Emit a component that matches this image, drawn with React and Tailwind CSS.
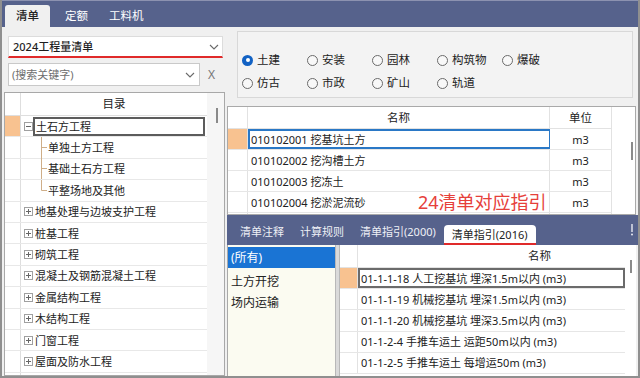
import React from "react";

const treeRows = [
  { label: "土石方工程", open: true, selected: true },
  { label: "单独土方工程", child: true },
  { label: "基础土石方工程", child: true },
  { label: "平整场地及其他", child: true, last: true },
  { label: "地基处理与边坡支护工程" },
  { label: "桩基工程" },
  { label: "砌筑工程" },
  { label: "混凝土及钢筋混凝土工程" },
  { label: "金属结构工程" },
  { label: "木结构工程" },
  { label: "门窗工程" },
  { label: "屋面及防水工程" },
  { label: "", blank: true },
];

const radios = [
  ["土建", true],
  ["安装"],
  ["园林"],
  ["构筑物"],
  ["爆破"],
  ["仿古"],
  ["市政"],
  ["矿山"],
  ["轨道"],
];

const qdRows = [
  ["010102001 挖基坑土方", "m3"],
  ["010102002 挖沟槽土方", "m3"],
  ["010102003 挖冻土", "m3"],
  ["010102004 挖淤泥流砂", "m3"],
  ["", ""],
];

const guideRows = [
  "01-1-1-18 人工挖基坑 埋深1.5m以内 (m3)",
  "01-1-1-19 机械挖基坑 埋深1.5m以内 (m3)",
  "01-1-1-20 机械挖基坑 埋深3.5m以内 (m3)",
  "01-1-2-4 手推车运土 运距50m以内 (m3)",
  "01-1-2-5 手推车运土 每增运50m (m3)",
];

function Chevron() {
  return (
    <svg width="10" height="6" viewBox="0 0 10 6" className="shrink-0">
      <path d="M1 1l4 4 4-4" fill="none" stroke="#6a6a6a" strokeWidth="1.1" />
    </svg>
  );
}

function PlusBox({ minus }) {
  return (
    <svg width="9" height="9" viewBox="0 0 9 9" className="shrink-0">
      <rect x="0.5" y="0.5" width="8" height="8" fill="white" stroke="#a0a0a0" />
      <line x1="2" y1="4.5" x2="7" y2="4.5" stroke="#666" />
      {!minus && <line x1="4.5" y1="2" x2="4.5" y2="7" stroke="#666" />}
    </svg>
  );
}

function TreeLine({ last }) {
  return (
    <svg width="7" height="21" viewBox="0 0 7 21" className="shrink-0">
      <line x1="1.5" y1="0" x2="1.5" y2={last ? 10.5 : 21} stroke="#cfae88" />
      <line x1="1.5" y1="10.5" x2="7" y2="10.5" stroke="#cfae88" />
    </svg>
  );
}

function Radio({ label, checked }) {
  return (
    <div className="h-[20px] flex items-center gap-[4px]">
      {checked ? (
        <div className="w-[11px] h-[11px] rounded-full bg-[#1262c4] flex items-center justify-center">
          <div className="w-[4px] h-[4px] rounded-full bg-white" />
        </div>
      ) : (
        <div className="w-[11px] h-[11px] rounded-full border border-[#6a6a6a] bg-[#f8f8f8]" />
      )}
      <span className="text-[11.5px] text-[#222]">{label}</span>
    </div>
  );
}

export default function App() {
  return (
    <div className="w-[640px] h-[378px] overflow-hidden flex flex-col bg-[#f0f0f0] border-x-2 border-b-2 border-[#8f8f8f] font-['Noto_Sans','Noto_Sans_CJK_SC',sans-serif] text-[#222] leading-none">
      {/* top tabs */}
      <div className="h-[27px] shrink-0 bg-[#56628c] border-t border-[#8c92b0] flex items-end pl-[3px]">
        <div className="w-[45px] h-[22px] bg-[#f0f0f0] rounded-t-[3px] flex items-center justify-center text-[11.5px] font-medium text-[#222]">
          清单
        </div>
        <span className="ml-[15px] mb-[6px] text-[11.5px] text-white">定额</span>
        <span className="ml-[21px] mb-[6px] text-[11.5px] text-white">工料机</span>
      </div>

      <div className="flex flex-1 min-h-0">
        {/* left panel */}
        <div className="w-[224px] shrink-0 flex flex-col pt-[9px]">
          <div className="ml-[6px] w-[215px] h-[22px] bg-white border border-[#dcdcdc] border-b-2 border-b-[#e02a2a] flex items-center justify-between pl-[4px] pr-[3px]">
            <span className="text-[11px] font-medium text-[#1e1e1e]">2024工程量清单</span>
            <Chevron />
          </div>
          <div className="mt-[5px] flex items-center">
            <div className="ml-[6px] w-[192px] h-[23px] bg-white border border-[#c9c9c9] flex items-center justify-between pl-[3px] pr-[4px]">
              <span className="text-[11px] text-[#6e6e6e]">(搜索关键字)</span>
              <Chevron />
            </div>
            <span className="ml-[8px] text-[12px] text-[#777]">X</span>
          </div>

          {/* tree */}
          <div className="mt-[6px] ml-[2px] w-[221px] flex-1 min-h-0 bg-white border border-[#a8a8a8] flex overflow-hidden">
            <div className="flex-1 flex flex-col">
              <div className="h-[23px] shrink-0 flex border-b border-[#dedede]">
                <div className="w-[16px] border-r border-[#dedede]" />
                <div className="flex-1 flex items-center justify-center text-[11.5px]">目录</div>
              </div>
              {treeRows.map((r, i) => (
                <div key={i} className="h-[21.4px] shrink-0 flex border-b border-[#e8e8e8]">
                  <div className={`w-[16px] border-r border-[#dedede] ${r.selected ? "bg-[#f8c290]" : ""}`} />
                  {r.blank ? null : r.child ? (
                    <div className="flex-1 flex items-center pl-[19px] gap-[1px]">
                      <TreeLine last={r.last} />
                      <span className="text-[11px]">{r.label}</span>
                    </div>
                  ) : r.selected ? (
                    <div className="flex-1 flex items-center pl-[3px] pr-[2px]">
                      <PlusBox minus />
                      <div className="flex-1 h-[19px] border-2 border-[#5c5c5c] flex items-center pl-[1px] text-[11px]">
                        {r.label}
                      </div>
                    </div>
                  ) : (
                    <div className="flex-1 flex items-center pl-[3px] gap-[2px]">
                      <PlusBox />
                      <span className="text-[11px]">{r.label}</span>
                    </div>
                  )}
                </div>
              ))}
            </div>
            <div className="w-[17px] shrink-0 bg-[#f6f6f6] pt-[15px] pl-[9px]">
              <div className="w-[2px] h-[15px] bg-[#8a8a8a]" />
            </div>
          </div>
        </div>

        {/* right panel */}
        <div className="flex-1 min-w-0 flex flex-col pt-[4px]">
          <div className="ml-[11px] w-[396px] h-[67px] shrink-0 border border-[#d8d8d8] bg-[#f3f3f3] pt-[18px] pl-[4px] grid grid-cols-[65px_65px_65px_65px_65px] gap-y-[3px] content-start">
            {radios.map(([label, checked]) => (
              <Radio key={label} label={label} checked={checked} />
            ))}
          </div>

          {/* upper table */}
          <div className="relative mt-[8px] ml-px w-[409px] h-[109px] shrink-0 bg-white border border-[#a9a9a9] flex overflow-hidden">
            <div className="flex-1 flex flex-col">
              <div className="h-[22px] shrink-0 flex border-b border-[#e2e2e2] text-[11.5px]">
                <div className="w-[20px] border-r border-[#e2e2e2]" />
                <div className="w-[302px] border-r border-[#e2e2e2] flex items-center justify-center">名称</div>
                <div className="w-[62px] border-r border-[#e2e2e2] flex items-center justify-center">单位</div>
              </div>
              {qdRows.map(([name, unit], i) => (
                <div key={i} className="h-[21px] shrink-0 flex border-b border-[#e6e6e6] text-[11px]">
                  <div className={`w-[20px] border-r border-[#e2e2e2] ${i === 0 ? "bg-[#f8c290]" : ""}`} />
                  <div
                    className={`w-[302px] flex items-center border-r ${
                      i === 0 ? "border-2 border-[#2a78c6] pl-px" : "border-[#e2e2e2] pl-[3px]"
                    }`}
                  >
                    {name}
                  </div>
                  <div className="w-[62px] border-r border-[#e2e2e2] flex items-center justify-center">{unit}</div>
                </div>
              ))}
            </div>
            <div className="w-[23px] shrink-0 pt-[35px] pl-[19px]">
              <div className="w-[2px] h-[18px] bg-[#8a8a8a]" />
            </div>
            <span className="absolute left-[190px] top-[86px] text-[18px] leading-none text-[#e6403a] bg-white">
              24清单对应指引
            </span>
          </div>

          {/* bottom tabs */}
          <div className="ml-px h-[30px] shrink-0 bg-[#56628c] flex items-end pl-[5px]">
            <span className="px-[8px] mb-[8px] text-[11px] text-[#eef0f6]">清单注释</span>
            <span className="px-[8px] mb-[8px] text-[11px] text-[#eef0f6]">计算规则</span>
            <span className="px-[8px] mb-[8px] text-[11px] text-[#eef0f6]">清单指引(2000)</span>
            <div className="h-[20px] px-[8px] bg-white rounded-t-[4px] border-b-2 border-[#e02a2a] flex items-center text-[11px] text-[#222]">
              清单指引(2016)
            </div>
            <div className="flex-1 flex justify-end pr-[4px] mb-[9px]">
              <svg width="4" height="12" viewBox="0 0 4 12">
                <line x1="2" y1="0" x2="2" y2="8" stroke="#e8eaf2" strokeWidth="1.4" />
                <circle cx="2" cy="10.5" r="1" fill="#e8eaf2" />
              </svg>
            </div>
          </div>

          {/* bottom area */}
          <div className="flex-1 min-h-0 flex pl-px">
            <div className="w-[108px] shrink-0 bg-[#fbfbf1] border-l border-[#a9a9a9] flex flex-col">
              <div className="mt-[2px] h-[21px] bg-[#1a74d4] text-white text-[12px] flex items-center pl-[3px]">(所有)</div>
              <div className="mt-[3px] h-[21px] text-[12px] flex items-center pl-[3px]">土方开挖</div>
              <div className="h-[21px] text-[12px] flex items-center pl-[3px]">场内运输</div>
            </div>
            <div className="w-[5px] shrink-0 bg-[#dadada] border-x border-[#b8b8b8]" />
            <div className="w-[296px] shrink-0 bg-white flex overflow-hidden">
              <div className="flex-1 flex flex-col">
                <div className="h-[23px] shrink-0 flex border-b border-[#e2e2e2]">
                  <div className="w-[18px] border-r border-[#e2e2e2]" />
                  <div className="flex-1 flex items-center pl-[170px] text-[11.5px]">名称</div>
                </div>
                {guideRows.map((t, i) => (
                  <div key={i} className="h-[21.2px] shrink-0 flex border-b border-[#e6e6e6] text-[11px]">
                    <div className={`w-[18px] border-r border-[#e2e2e2] ${i === 0 ? "bg-[#f8c290]" : ""}`} />
                    <div
                      className={`flex-1 flex items-center whitespace-nowrap ${
                        i === 0 ? "border-2 border-[#6b6b6b] pl-px" : "pl-[3px]"
                      }`}
                    >
                      {t}
                    </div>
                  </div>
                ))}
              </div>
              <div className="w-[11px] shrink-0 pt-[15px] pl-[5px]">
                <div className="w-[2px] h-[13px] bg-[#8a8a8a]" />
              </div>
            </div>
          </div>
        </div>
      </div>
    </div>
  );
}
